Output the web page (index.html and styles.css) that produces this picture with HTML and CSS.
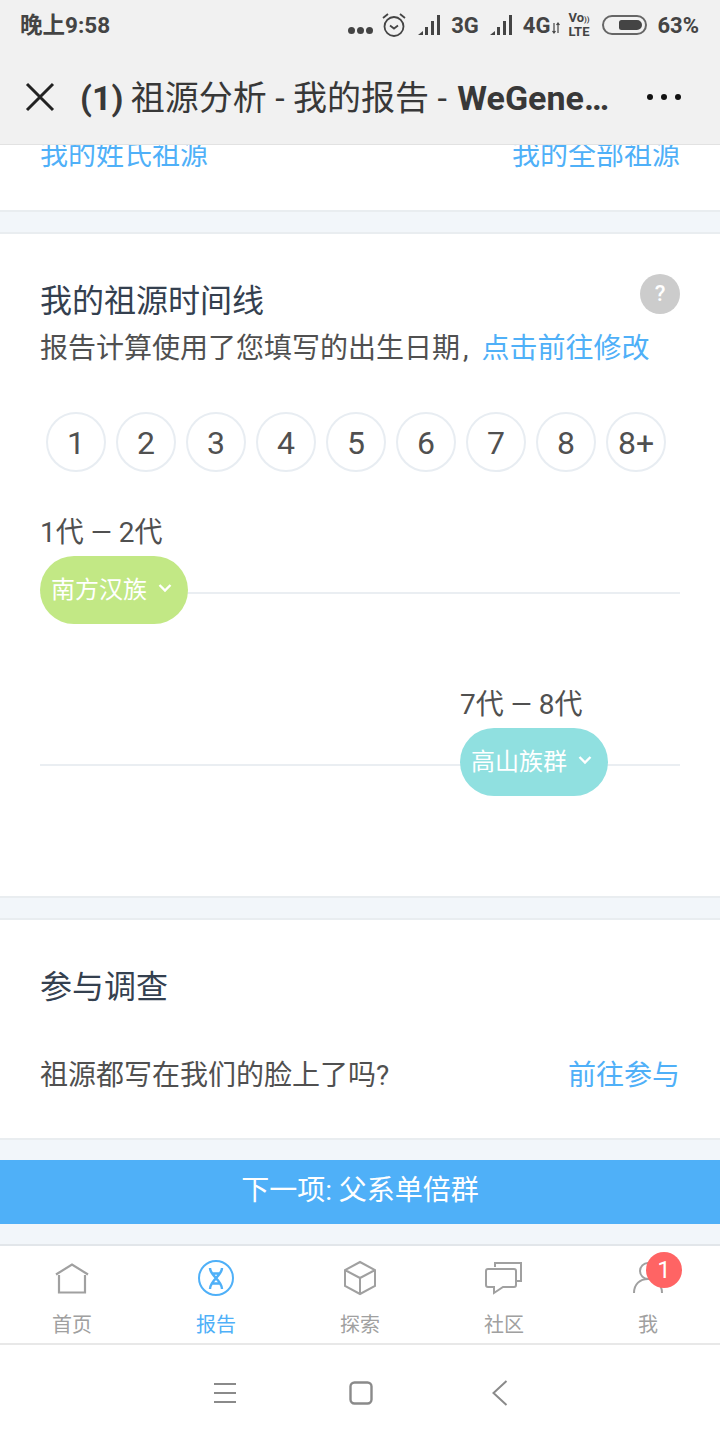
FILE: index.html
```html
<!DOCTYPE html>
<html>
<head>
  <meta charset="UTF-8">
  <title>祖源分析 - 我的报告</title>
  <link rel="stylesheet" href="styles.css">
</head>
<body>
  <div class="phone">
    <header class="top">
      <div class="status">
        <span class="status-time">晚上9:58</span>
        <div class="status-right">
          <span class="dots-small"><i></i><i></i><i></i></span>
          <svg class="alarm" width="24" height="26" viewBox="0 0 24 26" fill="none" stroke="#444" stroke-width="1.8"><circle cx="12" cy="14.500" r="9.500"/><path d="M8 13.500l4 3 4-3M1 6l5-4M23 6l-5-4"/></svg>
          <svg class="signal" width="22" height="22" viewBox="0 0 22 22" fill="#444"><path d="M0 21l5-4v4zM7 13h3v8H7zM13 7h3v14h-3zM19 1h3v20h-3z"/></svg>
          <span class="net">3G</span>
          <svg class="signal" width="22" height="22" viewBox="0 0 22 22" fill="#444"><path d="M0 21l5-4v4zM7 13h3v8H7zM13 7h3v14h-3zM19 1h3v20h-3z"/></svg>
          <span class="net">4G</span>
          <svg class="arrows" width="8" height="12" viewBox="0 0 8 12" fill="none" stroke="#444" stroke-width="1.2"><path d="M2 1v10M6 1v10M0.500 9L2 11l1.500-2M4.500 3L6 1l1.500 2"/></svg>
          <span class="volte"><b>Vo<small>))</small></b><b>LTE</b></span>
          <span class="battery"><i></i></span>
          <span class="net pct">63%</span>
        </div>
      </div>
      <div class="titlebar">
        <svg class="close" width="30" height="30" viewBox="0 0 30 30" stroke="#222" stroke-width="3" fill="none"><path d="M2 2l26 26M28 2L2 28"/></svg>
        <div class="title">(1) <span>祖源分析 - 我的报告 -</span> WeGene…</div>
        <div class="more"><i></i><i></i><i></i></div>
      </div>
    </header>

    <main class="content">
      <section class="card links-card">
        <a class="link">我的姓氏祖源</a>
        <a class="link">我的全部祖源</a>
      </section>

      <section class="card timeline-card">
        <div class="help">?</div>
        <h2>我的祖源时间线</h2>
        <p class="note">报告计算使用了您填写的出生日期<span class="comma">,</span> <a class="link">点击前往修改</a></p>
        <div class="generations">
          <div class="gen">1</div>
          <div class="gen">2</div>
          <div class="gen">3</div>
          <div class="gen">4</div>
          <div class="gen">5</div>
          <div class="gen">6</div>
          <div class="gen">7</div>
          <div class="gen">8</div>
          <div class="gen">8+</div>
        </div>
        <div class="line-block">
          <div class="range">1代 <span class="dash">—</span> 2代</div>
          <div class="track">
            <div class="pill pill-green">南方汉族
              <svg width="14" height="10" viewBox="0 0 14 10" fill="none" stroke="#fff" stroke-width="2.400"><path d="M1.500 2l5.500 5.500L12.500 2"/></svg>
            </div>
          </div>
        </div>
        <div class="line-block line-second">
          <div class="range">7代 <span class="dash">—</span> 8代</div>
          <div class="track">
            <div class="pill pill-teal">高山族群
              <svg width="14" height="10" viewBox="0 0 14 10" fill="none" stroke="#fff" stroke-width="2.400"><path d="M1.500 2l5.500 5.500L12.500 2"/></svg>
            </div>
          </div>
        </div>
      </section>

      <section class="card survey-card">
        <h2>参与调查</h2>
        <div class="survey-row">
          <span>祖源都写在我们的脸上了吗?</span>
          <a class="link">前往参与</a>
        </div>
      </section>

      <div class="next-btn">下一项: 父系单倍群</div>
    </main>

    <nav class="tabs">
      <div class="tab">
        <div class="tab-icon">
          <svg width="34" height="31" viewBox="0 0 34 31" fill="none" stroke="#a0a0a0" stroke-width="2.200"><path d="M1 11.500L17 1.500l16 10M4 12v17.500h26V12"/></svg>
        </div>
        <span>首页</span>
      </div>
      <div class="tab tab-on">
        <div class="tab-icon">
          <svg width="36" height="36" viewBox="0 0 36 36" fill="none" stroke="#4fb0f8" stroke-width="2"><circle cx="18" cy="18" r="17"/><path d="M12 8c0 8 12 12 12 21M24 8c0 8-12 12-12 21M13.500 13.500h9M13.500 23.500h9" stroke-width="2.400"/></svg>
        </div>
        <span>报告</span>
      </div>
      <div class="tab">
        <div class="tab-icon">
          <svg width="34" height="36" viewBox="0 0 34 36" fill="none" stroke="#a0a0a0" stroke-width="2"><path d="M17 2l15 8v16l-15 8-15-8V10zM2 10l15 8 15-8M17 18v16"/></svg>
        </div>
        <span>探索</span>
      </div>
      <div class="tab">
        <div class="tab-icon">
          <svg width="38" height="34" viewBox="0 0 38 34" fill="none" stroke="#a0a0a0" stroke-width="2"><path d="M10 6V2h26v18h-5"/><path d="M3 8h26a2 2 0 0 1 2 2v14a2 2 0 0 1-2 2H18l-9 6v-6H3a2 2 0 0 1-2-2V10a2 2 0 0 1 2-2z"/></svg>
        </div>
        <span>社区</span>
      </div>
      <div class="tab">
        <div class="tab-icon">
          <svg width="30" height="34" viewBox="0 0 30 34" fill="none" stroke="#a0a0a0" stroke-width="2"><circle cx="15" cy="10" r="8"/><path d="M1 32c0-9 6-14 14-14s14 5 14 14"/></svg>
        </div>
        <span>我</span>
        <div class="badge">1</div>
      </div>
    </nav>

    <footer class="sysnav">
      <svg width="22" height="22" viewBox="0 0 22 22" stroke="#8a8a8a" stroke-width="2" fill="none"><path d="M0 2h22M0 11h22M0 20h22"/></svg>
      <svg width="24" height="24" viewBox="0 0 24 24" stroke="#8a8a8a" stroke-width="2.400" fill="none"><rect x="1.500" y="1.500" width="21" height="21" rx="4"/></svg>
      <svg width="28" height="26" viewBox="0 0 28 26" stroke="#8a8a8a" stroke-width="2" fill="none"><path d="M20.500 1L7.500 13l13 12"/></svg>
    </footer>
  </div>
</body>
</html>
```

FILE: styles.css
```css
* {
  box-sizing: border-box;
}

body {
  margin: 0;
  font-family: Roboto, "Noto Sans CJK SC", sans-serif;
  color: #505050;
  background-color: #fff;
}

.phone {
  width: 720px;
  height: 1440px;
  display: flex;
  flex-direction: column;
  overflow: hidden;
}

/* status bar and title */
.top {
  height: 145px;
  flex: none;
  background-color: #f1f1f1;
  border-bottom: 1px solid #e2e2e2;
}

.status {
  height: 50px;
  padding: 0 21px 0 20px;
  display: flex;
  align-items: center;
  justify-content: space-between;
}

.status-time {
  margin-bottom: 4px;
  font-size: 22.500px;
  font-weight: 700;
  color: #444;
}

.status-right {
  display: flex;
  align-items: center;
}

.dots-small {
  display: flex;
  gap: 2px;
  margin-right: 9px;
  padding-top: 10px;
}

.dots-small i {
  width: 7px;
  height: 7px;
  border-radius: 50%;
  background-color: #444;
}

.alarm {
  margin-right: 1px;
}

.signal {
  margin-left: 11px;
}

.net {
  font-size: 22px;
  font-weight: 700;
  color: #444;
  margin-left: 11px;
}

.arrows {
  margin: 6px 0 0 2px;
}

.volte {
  display: flex;
  flex-direction: column;
  width: 22px;
  margin-left: 8px;
  font-size: 13px;
  line-height: 12px;
  color: #444;
}

.volte small {
  font-size: 8px;
}

.battery {
  width: 45px;
  height: 20px;
  margin-left: 12px;
  padding: 3px 3px 3px 15px;
  border: 2px solid #666;
  border-radius: 10px;
  display: flex;
}

.battery i {
  flex: 1;
  background-color: #444;
  border-radius: 3px 6px 6px 3px;
}

.pct {
  margin-left: 10px;
}

.titlebar {
  height: 94px;
  padding: 0 39px 0 25px;
  display: flex;
  align-items: center;
}

.close {
  flex: none;
}

.title {
  flex: 1;
  margin: 0 0 4px 25px;
  font-size: 34px;
  font-weight: 700;
  color: #383838;
  white-space: nowrap;
  overflow: hidden;
}

.title span {
  margin: 0 2px 0 -1px;
  font-weight: 400;
}

.more {
  display: flex;
  gap: 8px;
}

.more i {
  width: 6px;
  height: 6px;
  border-radius: 50%;
  background-color: #111;
}

/* page body */
.content {
  height: 1099px;
  flex: none;
  background-color: #f2f6fa;
  overflow: hidden;
}

.card {
  background-color: #fff;
  padding: 0 40px;
  border-top: 2px solid #e9edf0;
  border-bottom: 2px solid #e9edf0;
  margin-bottom: 20px;
}

.card h2 {
  margin: 0;
  font-size: 32px;
  line-height: 44px;
  font-weight: 400;
  color: #34404f;
}

.link {
  color: #4fb0f8;
}

.links-card {
  height: 67px;
  border-top: 0;
  display: flex;
  justify-content: space-between;
  font-size: 28px;
  line-height: 22px;
}

.timeline-card {
  height: 666px;
  padding-top: 45px;
  position: relative;
}

.help {
  position: absolute;
  top: 40px;
  right: 40px;
  width: 40px;
  height: 40px;
  border-radius: 50%;
  background-color: #ccc;
  color: #fff;
  font-size: 22px;
  font-weight: 500;
  line-height: 40px;
  text-align: center;
}

.note {
  margin: 4px 0 0;
  font-size: 28px;
  line-height: 44px;
}

.comma {
  margin-left: 3px;
}

.note .link {
  margin-left: 6px;
}

.generations {
  margin: 41px 14px 0 6px;
  display: flex;
  justify-content: space-between;
}

.gen {
  width: 60px;
  height: 60px;
  border: 2px solid #e8edf2;
  border-radius: 50%;
  font-size: 32px;
  line-height: 58px;
  text-align: center;
}

.line-block {
  margin-top: 39px;
}

.line-second {
  margin-top: 59px;
  padding-left: 420px;
}

.range {
  font-size: 28px;
  line-height: 44px;
}

.dash {
  font-size: 27px;
}

.track {
  height: 68px;
  margin-top: 1px;
  display: flex;
  align-items: center;
  background: linear-gradient(#eaeef2, #eaeef2) 0 36px / 100% 2px no-repeat;
}

.line-second .track {
  margin-left: -420px;
  padding-left: 420px;
}

.pill {
  width: 148px;
  height: 68px;
  padding: 0 0 6px 11px;
  border-radius: 34px;
  display: flex;
  align-items: center;
  gap: 11px;
  color: #fff;
  font-size: 24px;
}

.pill svg {
  margin-top: 2px;
}

.pill-green {
  background-color: #c2e885;
}

.pill-teal {
  background-color: #90e0e0;
}

.survey-card {
  height: 222px;
  padding-top: 45px;
}

.survey-row {
  margin-top: 45px;
  display: flex;
  justify-content: space-between;
  font-size: 28px;
  line-height: 44px;
}

.next-btn {
  height: 64px;
  background-color: #4fb0f8;
  color: #fff;
  font-size: 28px;
  line-height: 62px;
  text-align: center;
}

/* bottom tabs */
.tabs {
  height: 101px;
  flex: none;
  border-top: 2px solid #e2e6ea;
  border-bottom: 2px solid #e8e8e8;
  display: flex;
}

.tab {
  flex: 1;
  position: relative;
  display: flex;
  flex-direction: column;
  align-items: center;
  padding-top: 14px;
  gap: 15px;
  color: #a0a0a0;
  font-size: 20px;
  line-height: 28px;
}

.tab-on {
  color: #4fb0f8;
}

.tab-icon {
  height: 36px;
  display: flex;
  align-items: center;
}

.badge {
  position: absolute;
  top: 6px;
  left: 70px;
  width: 36px;
  height: 36px;
  border-radius: 50%;
  background-color: #ff6464;
  color: #fff;
  font-size: 24px;
  line-height: 36px;
  text-align: center;
}

.sysnav {
  flex: 1;
  display: flex;
  align-items: center;
  padding-left: 214px;
  gap: 113px;
}
```
